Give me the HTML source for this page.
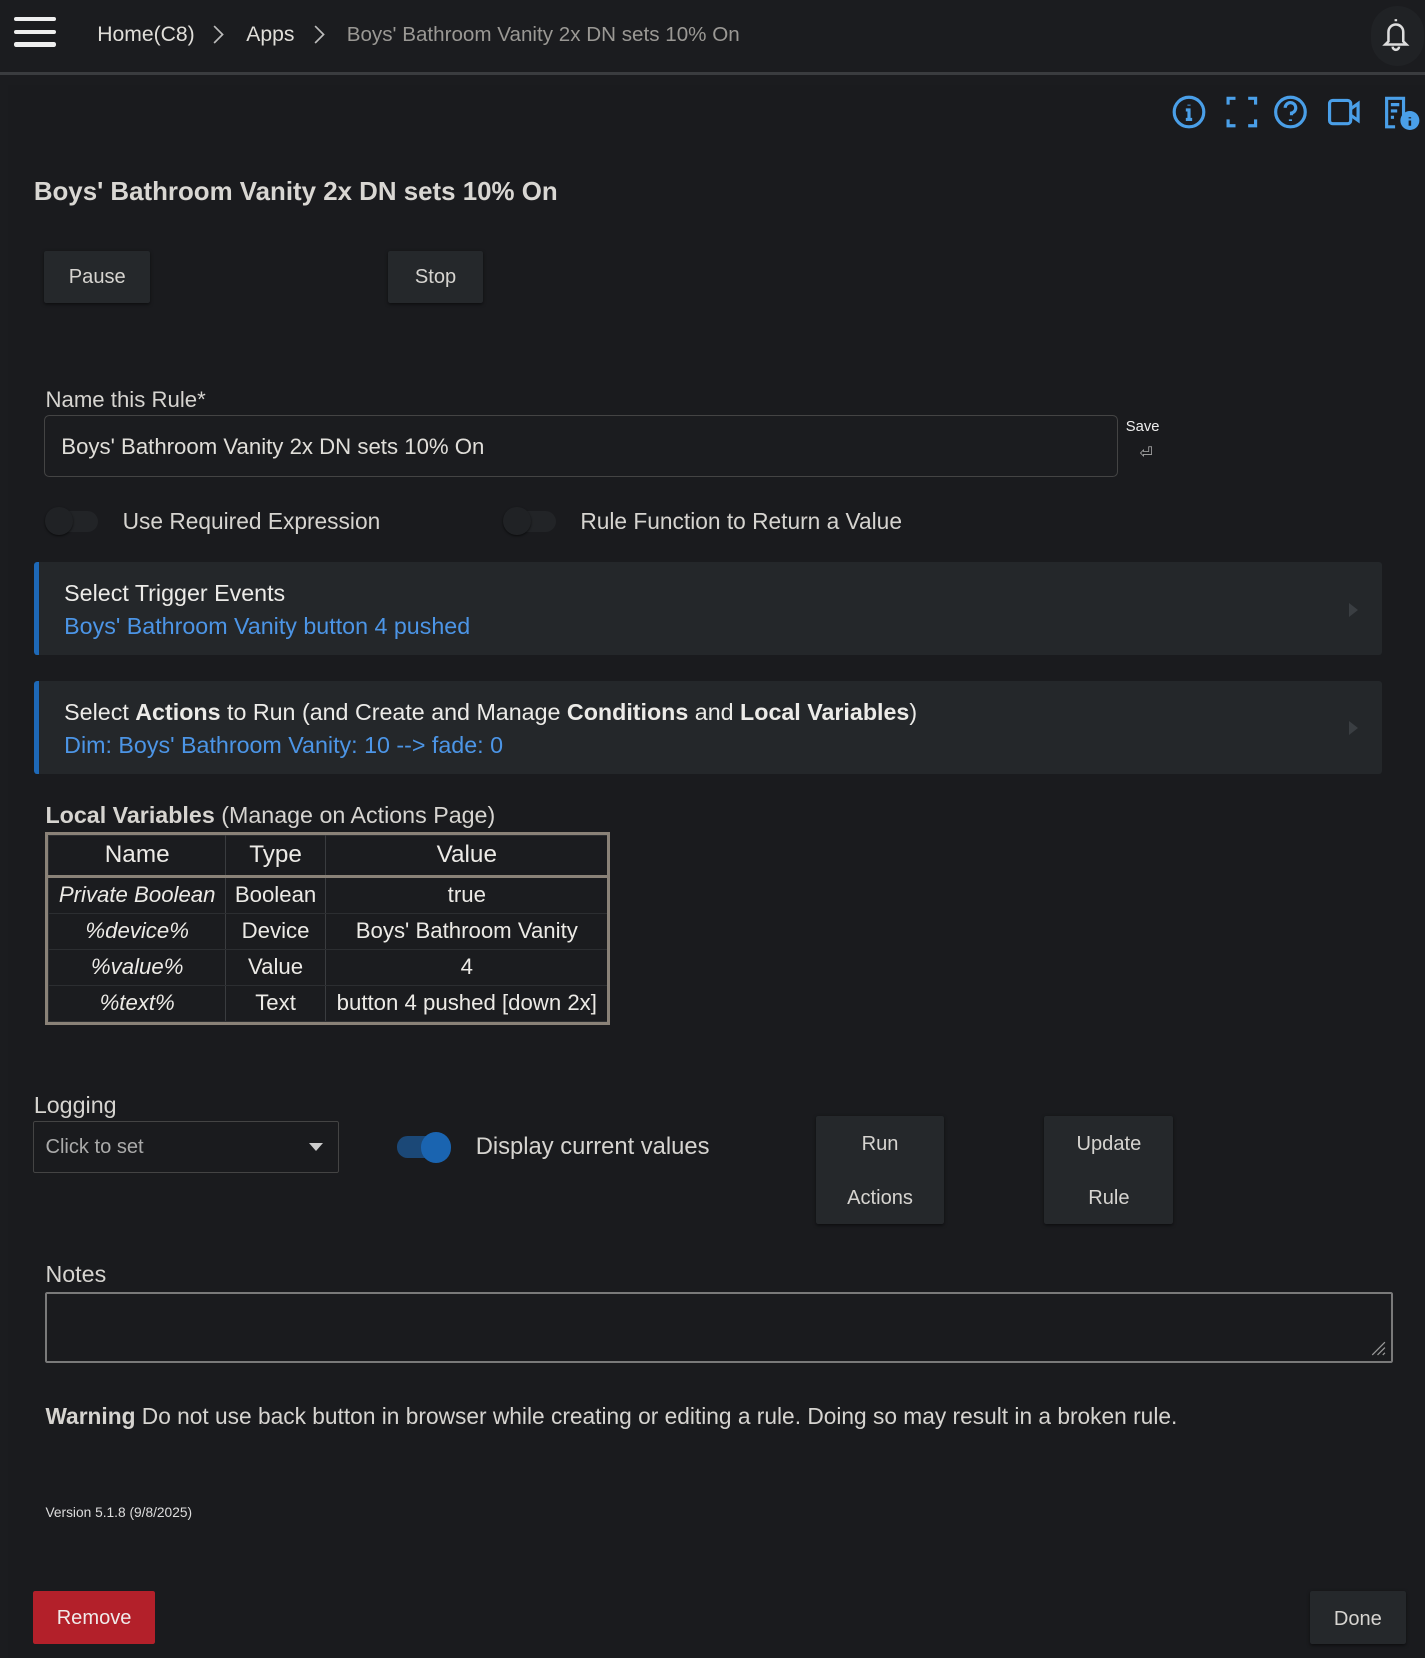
<!DOCTYPE html>
<html><head><meta charset="utf-8">
<style>
html,body{margin:0;padding:0;background:#1b1c1f;}
body{width:1425px;height:1657px;overflow:hidden;}
#w{zoom:1.0571;width:1348px;height:1568px;position:relative;font-family:"Liberation Sans",sans-serif;color:#d6d4d0;}
.a{position:absolute;}
.hdr{left:0;top:0;width:1348px;height:68px;background:#1b1c1f;border-bottom:3px solid #3a3c3f;}
.bc{top:22px;font-size:20px;color:#e0ded9;}
.btn{background:#25282b;color:#d6d4d0;font-size:19px;text-align:center;border-radius:2px;box-shadow:0 1px 3px rgba(0,0,0,.5);}
.panel{left:32px;width:1275px;height:88px;background:#24272a;border-left:5px solid #1e69b8;border-radius:3px;box-sizing:border-box;}
.panel .t{position:absolute;left:24px;top:17px;font-size:22px;color:#ecebe8;}
.panel .l{position:absolute;left:24px;top:48px;font-size:22px;color:#4c95e6;}
.panel .ar{position:absolute;right:22px;top:38px;width:0;height:0;border-left:9px solid #3a3e42;border-top:7px solid transparent;border-bottom:7px solid transparent;}
table{border-collapse:collapse;font-size:21px;color:#eceae6;}
td,th{text-align:center;padding:0 6px;height:33px;border:1px solid #2c2e31;border-right:1px solid #3a3c3f;}
th{font-weight:normal;font-size:23px;height:37px;border-bottom:3px solid #8a8278;}
.tg{width:48px;height:20px;border-radius:10px;background:#222427;}
.tg i{position:absolute;left:-2px;top:-3px;width:26px;height:26px;border-radius:50%;background:#202225;box-shadow:0 1px 2px rgba(0,0,0,.6);}
</style></head><body><div id="w">
<div class="a hdr"></div>
<div class="a" style="left:13px;top:16px;width:40px;height:4px;background:#eee;border-radius:2px"></div>
<div class="a" style="left:13px;top:28px;width:40px;height:4px;background:#eee;border-radius:2px"></div>
<div class="a" style="left:13px;top:40px;width:40px;height:4px;background:#eee;border-radius:2px"></div>
<div class="a bc" style="left:92px">Home(C8)</div>
<svg class="a" style="left:201px;top:24px" width="12" height="18"><path d="M2 1l8 8-8 8" fill="none" stroke="#bbb" stroke-width="1.6"/></svg>
<div class="a bc" style="left:233px">Apps</div>
<svg class="a" style="left:296px;top:24px" width="12" height="18"><path d="M2 1l8 8-8 8" fill="none" stroke="#bbb" stroke-width="1.6"/></svg>
<div class="a bc" style="left:328px;color:#9a9894;font-size:19.5px">Boys' Bathroom Vanity 2x DN sets 10% On</div>
<div class="a" style="left:1297px;top:6px;width:50px;height:56px;border-radius:25px;background:#202225"></div>
<svg class="a" style="left:1305px;top:15px" width="30" height="34" viewBox="0 0 30 34"><path d="M15 3v2M8 24V15a7 7 0 0 1 14 0v9l3 3H5z M12 29a3 3 0 0 0 6 0" fill="none" stroke="#ddd" stroke-width="2.4"/></svg>
<div class="a" style="left:8px;top:80px;width:1340px;height:1488px;background:#1a1b1e"></div>
<svg class="a" style="left:1108px;top:88px" width="240" height="36" viewBox="0 0 240 36" fill="none" stroke="#4a9fe8" stroke-width="3">
<circle cx="17" cy="18" r="14"/><path d="M17 11v1M14 16h3v9M14 25h6" />
<path d="M54 11V5h7M73 5h7v6M80 25v6h-7M61 31h-7v-6"/>
<circle cx="113" cy="18" r="14"/><path d="M108 14a5 5 0 1 1 6 5v2M113 25v1.5"/>
<rect x="150" y="7" width="20" height="22" rx="3"/><path d="M170 15l7-5v16l-7-5"/>
<path d="M212 32h-8V5h16v16M208 11h8M208 17h6M208 23h3"/>
<circle cx="226" cy="26" r="9" fill="#4a9fe8" stroke="none"/><path d="M226 23v1M226 26v5" stroke="#1a1b1e" stroke-width="2.4"/>
</svg>
<div class="a" style="left:32px;top:168px;font-size:24.5px;font-weight:bold;color:#d9d7d3">Boys' Bathroom Vanity 2x DN sets 10% On</div>
<div class="a btn" style="left:42px;top:237px;width:100px;height:50px;line-height:50px">Pause</div>
<div class="a btn" style="left:367px;top:237px;width:90px;height:50px;line-height:50px">Stop</div>
<div class="a" style="left:43px;top:366px;font-size:21px">Name this Rule*</div>
<div class="a" style="left:42px;top:393px;width:1014px;height:56px;border:1px solid #444;border-radius:5px;background:#1b1c1f"></div>
<div class="a" style="left:58px;top:411px;font-size:21px;color:#e0ded9">Boys' Bathroom Vanity 2x DN sets 10% On</div>
<div class="a" style="left:1065px;top:396px;font-size:14px;color:#eee">Save</div>
<div class="a" style="left:1078px;top:419px;font-size:15px;color:#aaa">&#x23CE;</div>
<div class="a tg" style="left:45px;top:483px"><i></i></div>
<div class="a" style="left:116px;top:481px;font-size:21.5px">Use Required Expression</div>
<div class="a tg" style="left:478px;top:483px"><i></i></div>
<div class="a" style="left:549px;top:481px;font-size:21.5px">Rule Function to Return a Value</div>
<div class="a panel" style="top:532px"><div class="t">Select Trigger Events</div><div class="l">Boys' Bathroom Vanity button 4 pushed</div><div class="ar"></div></div>
<div class="a panel" style="top:644px"><div class="t">Select <b>Actions</b> to Run (and Create and Manage <b>Conditions</b> and <b>Local Variables</b>)</div><div class="l">Dim: Boys' Bathroom Vanity: 10 --&gt; fade: 0</div><div class="ar"></div></div>
<div class="a" style="left:43px;top:759px;font-size:22px"><b>Local Variables</b> (Manage on Actions Page)</div>
<div class="a" style="left:43px;top:787px;border:3px solid #8a8278;background:#1b1c1f">
<table><tr><th style="width:154px">Name</th><th style="width:82px">Type</th><th style="width:254px;border-right:none">Value</th></tr>
<tr><td><i>Private Boolean</i></td><td>Boolean</td><td style="border-right:none">true</td></tr>
<tr><td><i>%device%</i></td><td>Device</td><td style="border-right:none">Boys' Bathroom Vanity</td></tr>
<tr><td><i>%value%</i></td><td>Value</td><td style="border-right:none">4</td></tr>
<tr><td><i>%text%</i></td><td>Text</td><td style="border-right:none">button 4 pushed [down 2x]</td></tr></table></div>
<div class="a" style="left:32px;top:1033px;font-size:22px">Logging</div>
<div class="a" style="left:31px;top:1060px;width:288px;height:48px;border:1px solid #444;border-radius:2px"></div>
<div class="a" style="left:43px;top:1075px;font-size:19px;color:#aaa">Click to set</div>
<div class="a" style="left:292px;top:1081px;border-top:8px solid #ccc;border-left:7px solid transparent;border-right:7px solid transparent"></div>
<div class="a" style="left:376px;top:1075px;width:50px;height:20px;border-radius:10px;background:#1b4877"></div>
<div class="a" style="left:398px;top:1071px;width:29px;height:29px;border-radius:50%;background:#1a64b0"></div>
<div class="a" style="left:450px;top:1072px;font-size:22.5px">Display current values</div>
<div class="a btn" style="left:772px;top:1056px;width:121px;height:102px;line-height:51px;padding-top:2px;box-sizing:border-box">Run<br>Actions</div>
<div class="a btn" style="left:988px;top:1056px;width:122px;height:102px;line-height:51px;padding-top:2px;box-sizing:border-box">Update<br>Rule</div>
<div class="a" style="left:43px;top:1193px;font-size:22px">Notes</div>
<div class="a" style="left:43px;top:1222px;width:1271px;height:64px;border:2px solid #7a7a7a;border-radius:2px"></div>
<svg class="a" style="left:1294px;top:1266px" width="18" height="18"><path d="M4 16L16 4M9 16l7-7M14 16l2-2" stroke="#999" stroke-width="1.2"/></svg>
<div class="a" style="left:43px;top:1327px;font-size:21.5px;color:#d6d4d0"><b>Warning</b> Do not use back button in browser while creating or editing a rule. Doing so may result in a broken rule.</div>
<div class="a" style="left:43px;top:1424px;font-size:13px;color:#ddd">Version 5.1.8 (9/8/2025)</div>
<div class="a" style="left:31px;top:1505px;width:116px;height:50px;line-height:52px;background:#b3202a;color:#f0eaea;font-size:19px;text-align:center;border-radius:2px">Remove</div>
<div class="a btn" style="left:1239px;top:1505px;width:91px;height:50px;line-height:53px">Done</div>
</div></body></html>
